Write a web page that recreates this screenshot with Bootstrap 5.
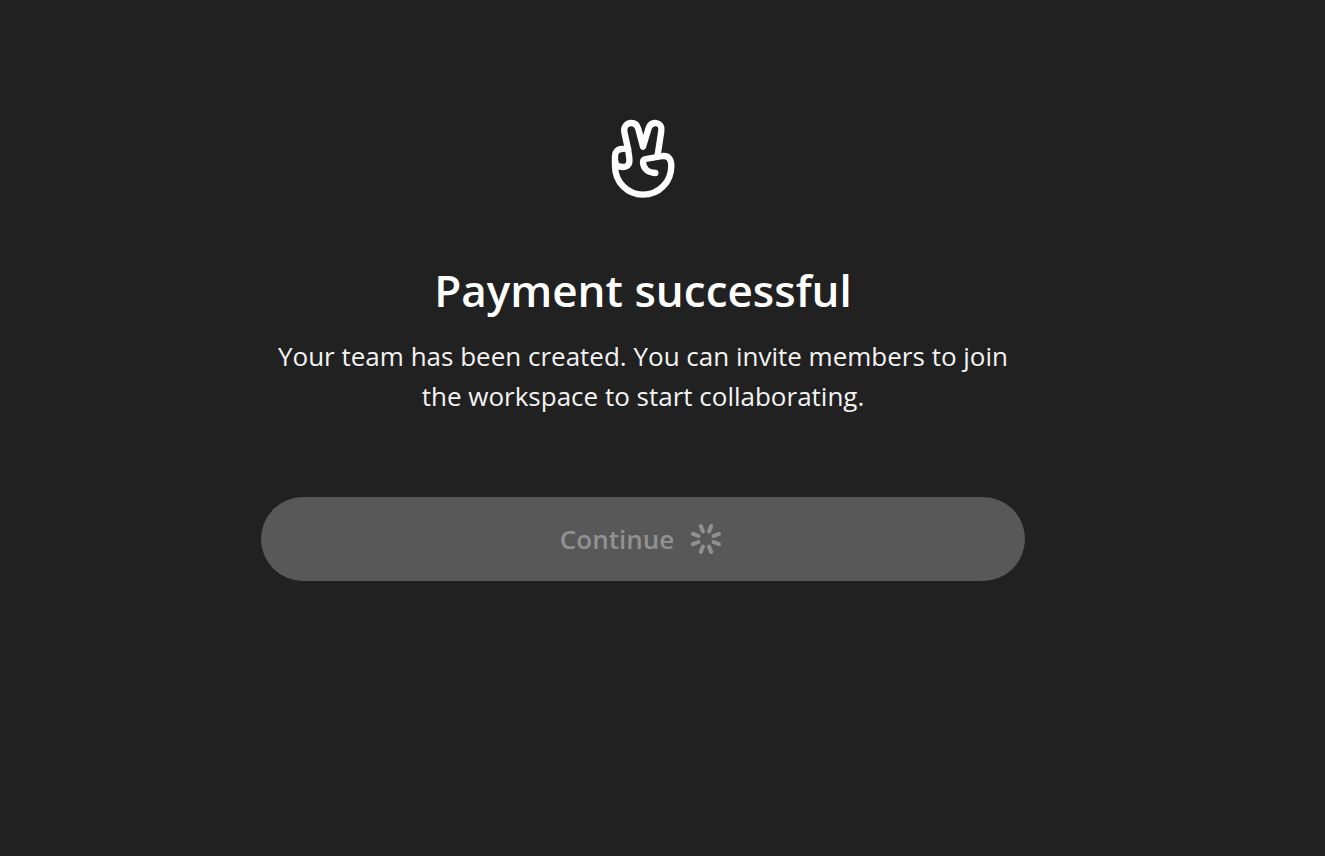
<!DOCTYPE html>
<html lang="en">
<head>
<meta charset="utf-8">
<meta name="viewport" content="width=device-width, initial-scale=1">
<title>Payment successful</title>
<link href="https://cdn.jsdelivr.net/npm/bootstrap@5.3.0/dist/css/bootstrap.min.css" rel="stylesheet">
<style>
  body { background: #212121; color: #fff; font-family: "Segoe UI", "Open Sans", "Noto Sans", sans-serif; padding-right: 39px; }
  .panel { max-width: 764px; padding-top: 110px; }
  .title { font-size: 44px; line-height: 56px; font-weight: 600; margin: 56px 0 18px; }
  .message { font-size: 26px; line-height: 40px; color: #f3f3f3; margin-bottom: 81px; }
  .continue-btn, .continue-btn:disabled { height: 84px; background: #585858; border: 0; color: #919191; font-size: 26px; font-weight: 600; opacity: 1; }
</style>
</head>
<body>
<main class="panel container-fluid px-0 text-center">
  <svg class="d-block mx-auto" width="86" height="96" viewBox="0 0 258 288" fill="none" stroke="#fff" stroke-width="19" stroke-linecap="round" stroke-linejoin="round" aria-hidden="true">
    <path d="M84 117L73 66C70 51 80 39 94 39C105 39 112 46 115 57L129 110L146 54C150 43 157 38 168 39C180 41 186 50 184 62L173 135"/>
    <path d="M84 117C78 115 71 116 66 117C53 117 45 126 45 138V168C45 216 82 254 129 254C177 254 214 216 214 167C214 147 205 137 189 138L137 147C131 148 129 152 129 157C130 177 145 188 166 189"/>
    <path d="M84 117L88 144C90 161 84 171 70 171C57 171 45 168 45 151"/>
  </svg>
  <h1 class="title">Payment successful</h1>
  <p class="message">Your team has been created. You can invite members to join the workspace to start collaborating.</p>
  <button type="button" class="continue-btn btn rounded-pill w-100 d-flex align-items-center justify-content-center gap-3 pe-3" disabled>
    <span>Continue</span>
    <svg width="32" height="32" viewBox="-16 -16 32 32" stroke="#919191" stroke-width="4" stroke-linecap="round" aria-hidden="true">
      <path d="M3 -7.5L5.2 -13M7.5 -3L13 -5.2M7.5 3L13 5.2M3 7.5L5.2 13M-3 7.5L-5.2 13M-7.5 3L-13 5.2M-7.5 -3L-13 -5.2M-3 -7.5L-5.2 -13"/>
    </svg>
  </button>
</main>
<script src="https://cdn.jsdelivr.net/npm/bootstrap@5.3.0/dist/js/bootstrap.bundle.min.js"></script>
</body>
</html>
